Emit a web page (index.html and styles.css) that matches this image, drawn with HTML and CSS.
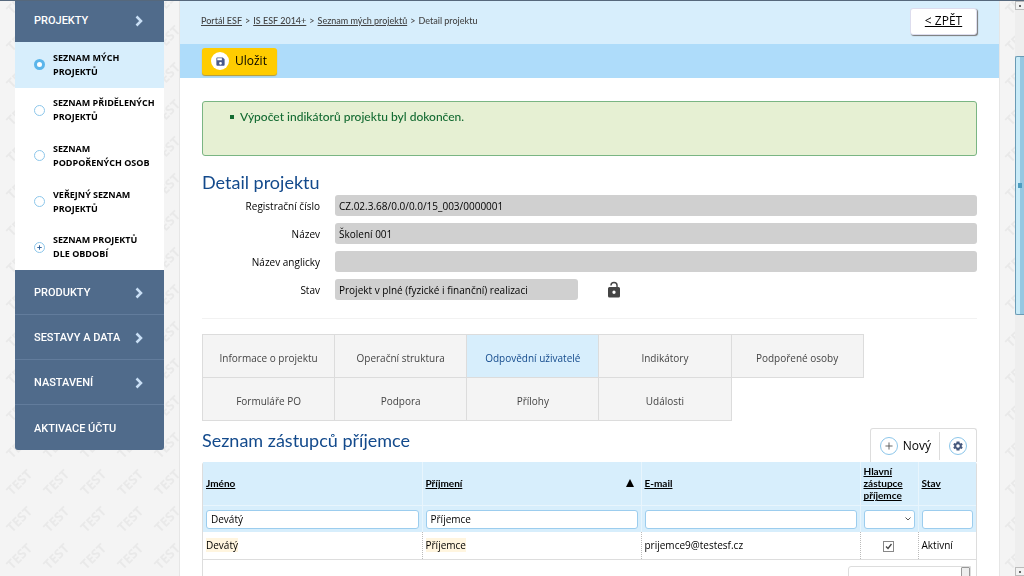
FILE: index.html
```html
<!DOCTYPE html>
<html lang="cs">
<head>
<meta charset="utf-8">
<meta name="viewport" content="width=device-width, initial-scale=1">
<title>Detail projektu</title>
<link rel="stylesheet" href="styles.css">
</head>
<body>
<svg class="watermark" aria-hidden="true">
  <defs>
    <pattern id="test-tile" x="0" y="19" width="37" height="37" patternUnits="userSpaceOnUse">
      <text x="19" y="24" text-anchor="middle" transform="rotate(-45 19 19)">TEST</text>
    </pattern>
  </defs>
  <rect width="100%" height="100%" fill="url(#test-tile)"/>
</svg>
<div class="page">
  <nav class="sidebar" aria-label="Hlavní menu">
    <a class="menu-item menu-first" href="#">PROJEKTY <svg class="chevron" viewBox="0 0 8 12"><path d="M1.500 1.500 6 6 1.500 10.500"/></svg></a>
    <ul class="submenu">
      <li><a class="sub-item active" href="#"><span class="dot dot-on"></span><span>SEZNAM MÝCH<br>PROJEKTŮ</span></a></li>
      <li><a class="sub-item" href="#"><span class="dot"></span><span>SEZNAM PŘIDĚLENÝCH<br>PROJEKTŮ</span></a></li>
      <li><a class="sub-item" href="#"><span class="dot"></span><span>SEZNAM<br>PODPOŘENÝCH OSOB</span></a></li>
      <li><a class="sub-item" href="#"><span class="dot"></span><span>VEŘEJNÝ SEZNAM<br>PROJEKTŮ</span></a></li>
      <li><a class="sub-item" href="#"><span class="dot"><svg viewBox="0 0 10 10"><path d="M5 2.500v5M2.500 5h5"/></svg></span><span>SEZNAM PROJEKTŮ<br>DLE OBDOBÍ</span></a></li>
    </ul>
    <a class="menu-item" href="#">PRODUKTY <svg class="chevron" viewBox="0 0 8 12"><path d="M1.500 1.500 6 6 1.500 10.500"/></svg></a>
    <a class="menu-item" href="#">SESTAVY A DATA <svg class="chevron" viewBox="0 0 8 12"><path d="M1.500 1.500 6 6 1.500 10.500"/></svg></a>
    <a class="menu-item" href="#">NASTAVENÍ <svg class="chevron" viewBox="0 0 8 12"><path d="M1.500 1.500 6 6 1.500 10.500"/></svg></a>
    <a class="menu-item menu-last" href="#">AKTIVACE ÚČTU</a>
  </nav>

  <main class="main">
    <header class="topbar">
      <nav class="crumbs" aria-label="Drobečková navigace">
        <a href="#">Portál ESF</a><span>&gt;</span><a href="#">IS ESF 2014+</a><span>&gt;</span><a href="#">Seznam mých projektů</a><span>&gt;</span><span>Detail projektu</span>
      </nav>
      <a class="back" href="#">&lt; ZPĚT</a>
    </header>
    <div class="actions">
      <button class="save" type="button">
        <span class="save-icon"><svg viewBox="0 0 24 24"><path fill-rule="evenodd" d="M17 3H5a2 2 0 0 0-2 2v14a2 2 0 0 0 2 2h14a2 2 0 0 0 2-2V7zM12 19a3 3 0 1 1 0-6 3 3 0 0 1 0 6zM15 9H5V5h10z"/></svg></span>
        Uložit
      </button>
    </div>

    <div class="content">
      <ul class="notice"><li>Výpočet indikátorů projektu byl dokončen.</li></ul>

      <h1>Detail projektu</h1>
      <form class="detail">
        <label for="reg">Registrační číslo</label>
        <input id="reg" type="text" readonly value="CZ.02.3.68/0.0/0.0/15_003/0000001">
        <label for="name">Název</label>
        <input id="name" type="text" readonly value="Školení 001">
        <label for="name-en">Název anglicky</label>
        <input id="name-en" type="text" readonly value="">
        <label for="state">Stav</label>
        <div class="state-row">
          <input id="state" type="text" readonly value="Projekt v plné (fyzické i finanční) realizaci">
          <svg class="lock" viewBox="0 0 24 24"><path fill-rule="evenodd" d="M18 8h-1V6A5 5 0 0 0 7 6h1.900a3.100 3.100 0 0 1 6.200 0v2H6a2 2 0 0 0-2 2v10a2 2 0 0 0 2 2h12a2 2 0 0 0 2-2V10a2 2 0 0 0-2-2zM12 17.200a2.200 2.200 0 1 1 0-4.400 2.200 2.200 0 0 1 0 4.400z"/></svg>
        </div>
      </form>

      <nav class="tabs" aria-label="Záložky projektu">
        <a href="#">Informace o projektu</a>
        <a href="#">Operační struktura</a>
        <a class="current" href="#">Odpovědní uživatelé</a>
        <a href="#">Indikátory</a>
        <a href="#">Podpořené osoby</a>
        <a href="#">Formuláře PO</a>
        <a href="#">Podpora</a>
        <a href="#">Přílohy</a>
        <a href="#">Události</a>
      </nav>

      <div class="list-head">
        <h2>Seznam zástupců příjemce</h2>
        <div class="tools">
          <button class="tool-new" type="button"><span class="ring"><svg viewBox="0 0 18 18"><path d="M9 5v8M5 9h8"/></svg></span>Nový</button>
          <button class="tool-gear" type="button" aria-label="Nastavení seznamu"><span class="ring"><svg class="gear" viewBox="0 0 24 24"><path fill-rule="evenodd" d="M19.400 13a7.500 7.500 0 0 0 0-2l2.100-1.600-2-3.500-2.500 1a8 8 0 0 0-1.700-1L15 3h-6l-.3 2.900a8 8 0 0 0-1.700 1l-2.500-1-2 3.500L4.600 11a7.500 7.500 0 0 0 0 2l-2.100 1.600 2 3.500 2.500-1a8 8 0 0 0 1.700 1L9 21h6l.3-2.900a8 8 0 0 0 1.700-1l2.500 1 2-3.500zM12 15.500a3.500 3.500 0 1 1 0-7 3.500 3.500 0 0 1 0 7z"/></svg></span></button>
        </div>
      </div>

      <div class="grid-box">
        <table class="grid">
          <colgroup><col class="c-name"><col class="c-name"><col class="c-name"><col class="c-main"><col class="c-state"></colgroup>
          <thead>
            <tr class="titles">
              <th scope="col"><a href="#">Jméno</a></th>
              <th scope="col"><div class="sorted"><a href="#">Příjmení</a><svg viewBox="0 0 8 8"><path d="M4 0 8 8H0z"/></svg></div></th>
              <th scope="col"><a href="#">E-mail</a></th>
              <th scope="col"><a href="#">Hlavní zástupce příjemce</a></th>
              <th scope="col"><a href="#">Stav</a></th>
            </tr>
            <tr class="filters">
              <td><input type="text" aria-label="Filtr Jméno" value="Devátý"></td>
              <td><input type="text" aria-label="Filtr Příjmení" value="Příjemce"></td>
              <td><input type="text" aria-label="Filtr E-mail"></td>
              <td><select aria-label="Filtr Hlavní zástupce příjemce"><option></option></select></td>
              <td><input type="text" aria-label="Filtr Stav"></td>
            </tr>
          </thead>
          <tbody>
            <tr>
              <td><mark>Devátý</mark></td>
              <td><mark>Příjemce</mark></td>
              <td>prijemce9@testesf.cz</td>
              <td class="center"><input class="tick" type="checkbox" checked aria-label="Hlavní zástupce příjemce"></td>
              <td>Aktivní</td>
            </tr>
          </tbody>
        </table>
        <div class="pager"><span class="pager-box"><span class="pager-thumb"></span></span></div>
      </div>
    </div>
  </main>

  <div class="scroll" aria-hidden="true">
    <span class="scroll-btn"></span>
    <span class="scroll-thumb"><span class="grip"></span></span>
    <span class="scroll-btn scroll-end"></span>
  </div>
</div>
</body>
</html>
```

FILE: styles.css
```css
* { box-sizing: border-box; }

body {
  margin: 0;
  height: 100vh;
  overflow: hidden;
  background: #f4f4f4;
  color: #000;
  font: 500 10px/14px "Trebuchet MS", "Open Sans", sans-serif;
}

a { color: inherit; }
button, input, select { font: inherit; color: inherit; }
h1, h2 {
  margin: 0;
  color: #134a8c;
  font: 400 18px/24px "Trebuchet MS", Lato, sans-serif;
}

.watermark {
  position: fixed;
  inset: 0;
  width: 100%;
  height: 100%;
  z-index: -1;
}
.watermark text { font: 700 13px "Open Sans", sans-serif; fill: #e9e9e9; }

.page {
  display: flex;
  height: 100vh;
  padding-left: 15px;
  border-top: 1px solid #56687c;
}

/* Sidebar */
.sidebar { flex: 0 0 149px; margin-right: 15px; }
.menu-item {
  display: flex;
  align-items: center;
  justify-content: space-between;
  height: 45px;
  padding: 2px 21px 0 19px;
  border-bottom: 1px solid #627c9c;
  background: #506b8b;
  color: #fff;
  font-family: "Trebuchet MS", Roboto, sans-serif;
  font-size: 11px;
  text-decoration: none;
}
.menu-first { height: 41px; padding-bottom: 4px; border-bottom: 0; }
.menu-last { border-bottom: 0; border-radius: 0 0 3px 3px; }
.chevron { width: 8px; height: 12px; fill: none; stroke: #c9dff5; stroke-width: 2.5; }
.submenu {
  display: grid;
  grid-auto-rows: 1fr;
  height: 228px;
  margin: 0;
  padding: 0;
  background: #fff;
  list-style: none;
}
.sub-item {
  display: flex;
  align-items: center;
  gap: 8px;
  height: 100%;
  padding-left: 19px;
  font-size: 9px;
  font-weight: 700;
  text-decoration: none;
  white-space: nowrap;
}
.active { background: #d7eefc; }
.dot {
  flex: none;
  display: flex;
  width: 11px;
  height: 11px;
  border: 1px solid #8cc6ea;
  border-radius: 50%;
  background: #fff;
}
.dot-on { border: 3px solid #5bb5ea; }
.dot svg { width: 9px; height: 9px; stroke: #245a96; }

/* Main column */
.main {
  flex: 1;
  display: flex;
  flex-direction: column;
  min-width: 0;
  margin-right: 15px;
  border: solid #e6e6e6;
  border-width: 0 1px;
  background: #fff;
}
.topbar {
  display: flex;
  flex: none;
  align-items: center;
  justify-content: space-between;
  height: 43px;
  padding: 0 22px 3px 21px;
  background: #d7eefc;
}
.crumbs { display: flex; gap: 3px; color: #444; font-family: "Trebuchet MS", Lato, sans-serif; font-size: 9px; }
.back {
  display: flex;
  align-items: center;
  justify-content: center;
  width: 67px;
  height: 27px;
  border: 1px solid #dde;
  border-radius: 3px;
  background: #fff;
  box-shadow: 1px 1px 1px #777;
  font-size: 12px;
}
.actions {
  display: flex;
  flex: none;
  align-items: center;
  height: 34px;
  padding: 0 22px;
  background: #aedcfa;
}
.save {
  display: flex;
  align-items: center;
  gap: 6px;
  height: 27px;
  padding: 0 10px 0 9px;
  border: 0;
  border-radius: 3px;
  background: #fc0;
  box-shadow: 0 1px 1px #b99a2c;
  font-size: 12px;
}
.save-icon {
  display: flex;
  align-items: center;
  justify-content: center;
  width: 18px;
  height: 18px;
  border-radius: 50%;
  background: #fff;
}
.save-icon svg { width: 11px; height: 11px; fill: #4a5a8c; }

.content { flex: 1; display: flex; flex-direction: column; min-height: 0; padding: 23px 22px 0; }
.notice {
  flex: none;
  min-height: 55px;
  margin: 0 0 14px;
  padding: 7px 0 0 27px;
  border: 1px solid #7ab583;
  border-radius: 3px;
  background: #e6f0d3;
  color: #146b32;
  font: 500 12px/16px "Trebuchet MS", Lato, sans-serif;
  list-style: none;
}
.notice li { display: flex; align-items: center; gap: 6px; }
.notice li::before { content: ""; width: 4px; height: 4px; background: #146b32; }

/* Detail form */
.detail {
  display: grid;
  grid-template-columns: 118px 1fr;
  gap: 7px 15px;
  align-items: center;
  padding: 1px 0 18px;
  border-bottom: 1px solid #f2f2f2;
}
.detail label { text-align: right; }
.detail input {
  width: 100%;
  height: 21px;
  padding: 0 4px;
  border: 0;
  border-radius: 3px;
  background: #d0d0d0;
}
.state-row { display: flex; align-items: center; gap: 27px; }
.state-row input { width: 243px; }
.lock { width: 18px; height: 18px; fill: #444; }

/* Tabs */
.tabs { display: flex; flex: none; flex-wrap: wrap; margin-top: 15px; padding: 0 0 1px 1px; }
.tabs a {
  display: flex;
  align-items: center;
  justify-content: center;
  width: 17.2%;
  height: 44px;
  margin: 0 0 -1px -1px;
  padding-top: 3px;
  border: 1px solid #dcdcdc;
  background: #f4f4f4;
  color: #444;
  text-decoration: none;
}
.tabs .current { background: #d7eefc; color: #134a8c; }

/* List */
.list-head { display: flex; justify-content: space-between; margin-top: 7px; }
.tools {
  display: flex;
  align-items: center;
  height: 34px;
  border: 1px solid #ddd;
  border-bottom: 0;
  border-radius: 3px 3px 0 0;
}
.tools button { display: flex; align-items: center; height: 28px; border: 0; background: none; font-size: 12px; }
.tool-new { gap: 5px; padding: 0 8px 0 9px; }
.tools .tool-gear { padding: 0 9px; border-left: 1px solid #ddd; }
.ring {
  display: flex;
  align-items: center;
  justify-content: center;
  width: 18px;
  height: 18px;
  border: 1px solid #8cc6ea;
  border-radius: 50%;
}
.ring svg { width: 16px; height: 16px; stroke: #555; }
.ring .gear { width: 12px; height: 12px; fill: #45587c; stroke: none; }

.grid-box { flex: 1; border: solid #ddd; border-width: 0 1px; border-radius: 3px 3px 0 0; }
.grid { width: 100%; table-layout: fixed; border-collapse: collapse; }
.c-main { width: 58px; }
.c-state { width: 58px; }
.grid thead { background: #d7eefc; }
.grid th, .grid td { padding: 0 4px 0 3px; text-align: left; }
.grid th {
  height: 43px;
  border-bottom: 1px solid #e8f5fd;
  font-family: "Trebuchet MS", Lato, sans-serif;
  font-weight: 700;
  line-height: 12px;
}
.grid th + th, .filters td + td { border-left: 1px solid #e8f5fd; }
.sorted { display: flex; align-items: center; justify-content: space-between; padding-right: 3px; }
.sorted svg { width: 8px; height: 8px; }
.grid .filters td { height: 27px; padding: 1px 3px 0; }
.filters input, .filters select {
  display: block;
  width: 100%;
  height: 19px;
  padding: 0 4px;
  border: 1px solid #9ccdee;
  border-radius: 3px;
  background: #fff;
}
.filters select {
  appearance: none;
  background: #fff url("data:image/svg+xml,%3Csvg xmlns='http://www.w3.org/2000/svg' viewBox='0 0 6 4'%3E%3Cpath d='M.5.5 3 3 5.500.5' fill='none' stroke='%23555'/%3E%3C/svg%3E") no-repeat right 3px center / 6px 4px;
}
.grid tbody td { height: 27px; border-bottom: 1px solid #ddd; }
.grid tbody td + td { border-left: 1px dotted #bbb; }
.grid .center { text-align: center; }
mark { background: #fff5df; color: inherit; }
.tick {
  appearance: none;
  width: 11px;
  height: 11px;
  margin: 0;
  border: 1px solid #888;
  vertical-align: middle;
  background: #fff url("data:image/svg+xml,%3Csvg xmlns='http://www.w3.org/2000/svg' viewBox='0 0 9 9'%3E%3Cpath d='M2 4.500l2 2 3.500-4.500' fill='none' stroke='%23444' stroke-width='1.300'/%3E%3C/svg%3E");
}
.pager { display: flex; justify-content: flex-end; padding: 6px 5px 0; }
.pager-box { display: flex; justify-content: flex-end; width: 123px; height: 20px; border: 1px solid #ddd; border-radius: 3px 0 0 0; }
.pager-thumb { width: 9px; border: 1px solid #999; border-radius: 1px; background: #eee; }

/* Scroll bar */
.scroll { flex: 0 0 9px; display: flex; flex-direction: column; background: #eee; }
.scroll-btn { flex: none; height: 9px; border: 1px solid #bbb; border-right: 0; background: #f2f2f2; }
.scroll-btn::before { content: ""; display: block; width: 2px; height: 2px; margin: 3px; background: #666; }
.scroll-thumb {
  display: flex;
  align-items: center;
  height: 45%;
  margin-top: 46px;
  padding-left: 2px;
  border: 1px solid #6a9bb5;
  border-right: 0;
  border-radius: 2px 0 0 2px;
  background: linear-gradient(to right, #c9ebf8 45%, #96c8e2 55%);
}
.grip { width: 4px; height: 5px; background: #4f9dc0; }
.scroll-end { margin-top: auto; }
```
